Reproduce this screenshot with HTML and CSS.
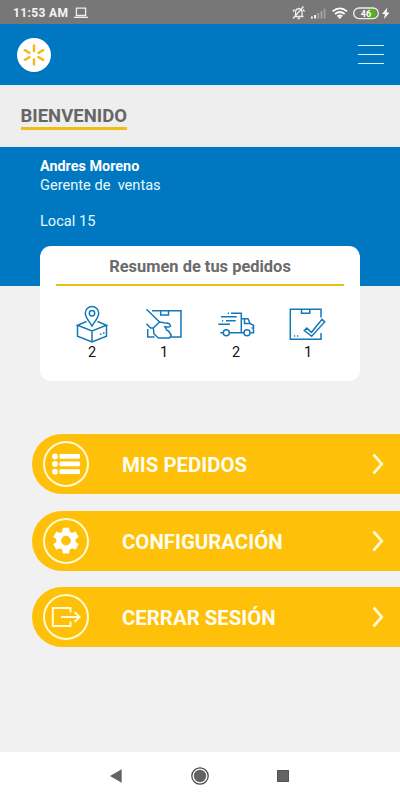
FILE: index.html
```html
<!DOCTYPE html>
<html lang="es">
<head>
<meta charset="utf-8">
<meta name="viewport" content="width=device-width">
<title>Bienvenido</title>
<link rel="stylesheet" href="styles.css">
</head>
<body>
<div class="status">
  <span class="time">11:53 AM</span>
  <svg class="laptop" width="14" height="12" viewBox="0 0 14 12"><path d="M2.4 1.2h9.2v7.3H2.4zM0 10.4h14" fill="none" stroke="#eee" stroke-width="1.3"/></svg>
  <svg class="tray" width="100" height="16" viewBox="0 0 100 16">
    <g fill="none" stroke="#eee" stroke-width="1.3"><path d="M4 11.500h8.500M4.500 11V7.500q0-3.500 3.300-4 3.200.5 3.200 4v4M6.500 13.500h2.500M2 13.500l10.500-12M2 6.500l1.500-2M12 4.500l1.500 2"/></g>
    <path d="M20 11.500h1.800v2H20zM23.200 10H25v3.500h-1.800z" fill="#fff"/>
    <path d="M26.400 8h1.800v5.500h-1.800zM29.600 6h1.800v7.500h-1.800zM32.800 3.500h1.600v10h-1.600z" fill="#a5a5a5"/>
    <g fill="none" stroke="#fff" stroke-width="1.700"><path d="M41.500 6.300q7.300-6 14.600 0M44 9q4.800-4 9.600 0M46.300 11.300q2.500-2 5 0"/></g><path d="M47 12l1.800 2 1.800-2q-1.800-1.400-3.600 0z" fill="#fff"/>
    <path d="M69 4h11.500a4.500 4.500 0 0 1 0 9H77V4z" fill="#4fb51d"/>
    <rect x="62.700" y="3" width="24.600" height="10.600" rx="5.300" fill="none" stroke="#eee" stroke-width="1.300"/>
    <text x="75" y="11.500" text-anchor="middle" class="charge">46</text>
    <path d="M96.500 2.500l-5.500 6.500h3l-1 5 5.500-6.500h-3z" fill="#fff"/>
  </svg>
</div>
<header class="header">
  <div class="logo"><svg width="34" height="34" viewBox="0 0 34 34"><path d="M17 7.500V13M17 21.500v5M7.800 12.200l4.700 2.600M26.200 12.200l-4.700 2.600M7.800 21.800l4.700-2.600M26.200 21.800l-4.700-2.600" stroke="#f3b91e" stroke-width="2.500" stroke-linecap="round"/></svg></div>
  <div class="menu"><i></i><i></i><i></i></div>
</header>
<section class="welcome"><h1>BIENVENIDO</h1></section>
<section class="profile">
  <strong>Andres Moreno</strong>
  <span class="role">Gerente de&nbsp; ventas</span>
  <span class="store">Local 15</span>
</section>
<section class="card">
  <h2>Resumen de tus pedidos</h2>
  <div class="stats">
    <div class="stat">
      <svg viewBox="0 0 40 40"><path d="M20 22C17 17 13.300 13.500 13.300 9.300a6.700 6.700 0 0 1 13.400 0C26.700 13.500 23 17 20 22zM14.500 17.500l-9 3.700L20 27l14.500-5.800-9-3.700M5.500 21.200v11L20 38l14.500-5.800v-11M20 27v11M28 30.500l1.500-.6M31 29.300l1.500-.6"/><circle cx="20" cy="9.300" r="2.700"/></svg>
      <span>2</span>
    </div>
    <div class="stat">
      <svg viewBox="0 0 40 40"><path d="M8 6.700h29V33H26M16.700 7v4h7.800V7M2.500 5.300l13 12.700M2.500 19.700l4 4.300h2.700M3.700 25v8h6.800M15.500 18L9.300 24l.7 6 4.500 4h11l1.700-3-3-4.300-2.500-1.200M15.500 18l4.700.7c3.500 0 6.300 1.300 6.300 3.600-1.500 1.400-3.600.4-5.600.5l2.500 4"/></svg>
      <span>1</span>
    </div>
    <div class="stat">
      <svg viewBox="0 0 40 40"><path d="M2.300 20.300H14M10 16.700h9.700M6 16.700h1.200M5 12.700h15.700M11.800 9.300H13M15 9.300h10.300v19.400M25.300 14.700H32l2.200 5 3.300 1.500v7.500h-3M28.500 14.700v4.800h5.700M13.500 28.700h14.300M4.300 28.700h3M35.500 24h2"/><circle cx="10.300" cy="28.700" r="3"/><circle cx="31" cy="28.700" r="3"/></svg>
      <span>2</span>
    </div>
    <div class="stat">
      <svg viewBox="0 0 40 40"><path d="M33 13.500V5.300H2.300v30H33V29M13.500 5.500v3.800h8.300V5.500M6 32h1.200M9 32h1.200M16.300 26.500l2.500-2.500 4.700 4.300L34 15.300l2.700 2.600L23.700 32.300z"/></svg>
      <span>1</span>
    </div>
  </div>
</section>
<nav class="actions">
  <a class="action"><span class="ring"><svg viewBox="0 0 46 46"><g fill="#fff"><circle cx="12" cy="15.500" r="2.900"/><circle cx="12" cy="23" r="2.900"/><circle cx="12" cy="30.700" r="2.900"/><rect x="16.500" y="13" width="20.500" height="4.700" rx="1.200"/><rect x="16.500" y="20.600" width="20.500" height="4.700" rx="1.200"/><rect x="16.500" y="28.300" width="20.500" height="4.700" rx="1.200"/></g></svg></span><b>MIS PEDIDOS</b><svg class="chev" viewBox="0 0 12 22"><path d="M1.500 1.500l8.300 9.500-8.300 9.500"/></svg></a>
  <a class="action"><span class="ring"><svg viewBox="0 0 46 46"><path transform="translate(6.900 6.500) scale(1.340)" fill="#fff" d="M19.140 12.940c.04-.3.060-.61.060-.94s-.02-.64-.07-.94l2.030-1.580a.49.49 0 0 0 .12-.61l-1.920-3.320a.49.49 0 0 0-.59-.22l-2.390.96a7 7 0 0 0-1.620-.94l-.36-2.540A.48.48 0 0 0 13.920 2.400h-3.840a.47.47 0 0 0-.47.410l-.36 2.540c-.59.24-1.130.57-1.620.94l-2.390-.96a.47.47 0 0 0-.59.220L2.740 8.870a.47.47 0 0 0 .12.610l2.030 1.580a6 6 0 0 0-.02 1.880l-2.030 1.580a.49.49 0 0 0-.12.610l1.920 3.320c.12.220.37.290.59.220l2.390-.96c.5.380 1.030.7 1.620.94l.36 2.540c.05.240.24.410.48.410h3.840c.24 0 .44-.17.470-.41l.36-2.540a7 7 0 0 0 1.620-.94l2.390.96c.22.080.47 0 .59-.22l1.920-3.320a.47.47 0 0 0-.12-.61zM12 15.600a3.600 3.600 0 1 1 0-7.200 3.600 3.600 0 0 1 0 7.200z"/></svg></span><b>CONFIGURACIÓN</b><svg class="chev" viewBox="0 0 12 22"><path d="M1.500 1.500l8.300 9.500-8.300 9.500"/></svg></a>
  <a class="action"><span class="ring"><svg viewBox="0 0 46 46"><path d="M27.500 18.500V14H9.800v18h17.700v-4.500M18 23h18.500M31.500 18l5 5-5 5" fill="none" stroke="#fffbd8" stroke-width="2"/></svg></span><b>CERRAR SESIÓN</b><svg class="chev" viewBox="0 0 12 22"><path d="M1.500 1.500l8.300 9.500-8.300 9.500"/></svg></a>
</nav>
<footer class="navbar">
  <svg width="12" height="14" viewBox="0 0 12 14"><path d="M0 7L11.700.3v13.400z" fill="#636363"/></svg>
  <svg width="18" height="18" viewBox="0 0 18 18"><circle cx="9" cy="9" r="8.200" fill="none" stroke="#444" stroke-width="1.200"/><circle cx="9" cy="9" r="6.200" fill="#636363"/></svg>
  <svg width="12" height="12" viewBox="0 0 12 12"><path d="M0 0h12v12H0z" fill="#636363"/><path d="M.5.500h11v11H.5z" fill="none" stroke="#555"/></svg>
</footer>
</body>
</html>
```
FILE: styles.css
```css
* { box-sizing: border-box; }
body { margin: 0; width: 400px; height: 800px; display: flex; flex-direction: column; background: #f1f1f1; font-family: Roboto, sans-serif; overflow: hidden; }
svg { display: block; flex: none; }
.status { height: 24px; flex: none; display: flex; align-items: center; padding: 1px 9px 0 13px; background: #777; color: #f4f4f4; }
.time { font-size: 12px; font-weight: 700; letter-spacing: .35px; width: 61px; white-space: nowrap; }
.tray { margin-left: auto; }
.charge { font: 700 9px Roboto, sans-serif; fill: #fff; }
.header { height: 61px; flex: none; display: flex; align-items: center; justify-content: space-between; padding: 0 16px 0 17px; background: #0078c1; }
.logo { width: 34px; height: 34px; border-radius: 50%; background: #fff; box-shadow: 0 1px 2px #0055904d; }
.menu { width: 26px; display: flex; flex-direction: column; gap: 8px; }
.menu i { height: 1px; background: #d9f1f7; }
.welcome { height: 62px; flex: none; padding: 18px 20px 0 20.500px; background: #eee; border-top: 1px solid #dff2fa; }
h1 { display: inline-block; margin: 0; height: 26px; font-size: 18.500px; line-height: 24px; font-weight: 700; color: #666; border-bottom: 3px solid #f0bd12; }
.profile { height: 139px; flex: none; display: flex; flex-direction: column; padding: 10px 40px 0; background: #0078c1; color: #e2fbff; font-size: 14.600px; line-height: 20px; }
.profile strong { color: #fff; font-size: 14.400px; line-height: 20px; }
.role { margin-top: -2px; }
.store { margin-top: 16px; }
.card { width: 320px; height: 135px; flex: none; margin: -40px 40px 0; padding: 0 16px; border-radius: 11px; background: #fff; position: relative; }
h2 { margin: 0; height: 40px; padding-top: 11px; font-size: 16.450px; line-height: 20px; font-weight: 700; text-align: center; color: #6b6b6b; border-bottom: 2px solid #ecbf20; }
.stats { display: grid; grid-template-columns: repeat(4, 72px); padding-top: 18px; }
.stat { display: flex; flex-direction: column; align-items: center; font-size: 14.500px; line-height: 18px; color: #111; }
.stat svg { width: 40px; height: 40px; fill: none; stroke: #1478b8; stroke-width: 1.500; }
.actions { margin-top: 53px; padding-left: 32px; display: flex; flex-direction: column; gap: 16.500px; }
.action { height: 60px; display: flex; align-items: center; padding: 0 16px 0 11px; border-radius: 30px 0 0 30px; background: #fec009; color: #fffef0; }
.ring { width: 46px; height: 46px; border: 2px solid #fffbd0; border-radius: 50%; }
.ring svg { width: 46px; height: 46px; margin: -2px; }
.action b { margin-left: 33px; padding-top: 2px; font-size: 20.400px; line-height: 24px; }
.chev { width: 12px; height: 22px; margin-left: auto; fill: none; stroke: #fffbd0; stroke-width: 2.700; }
.navbar { height: 48px; flex: none; margin-top: auto; display: flex; align-items: center; justify-content: space-between; padding: 0 111px 0 110px; background: #fff; }
```
